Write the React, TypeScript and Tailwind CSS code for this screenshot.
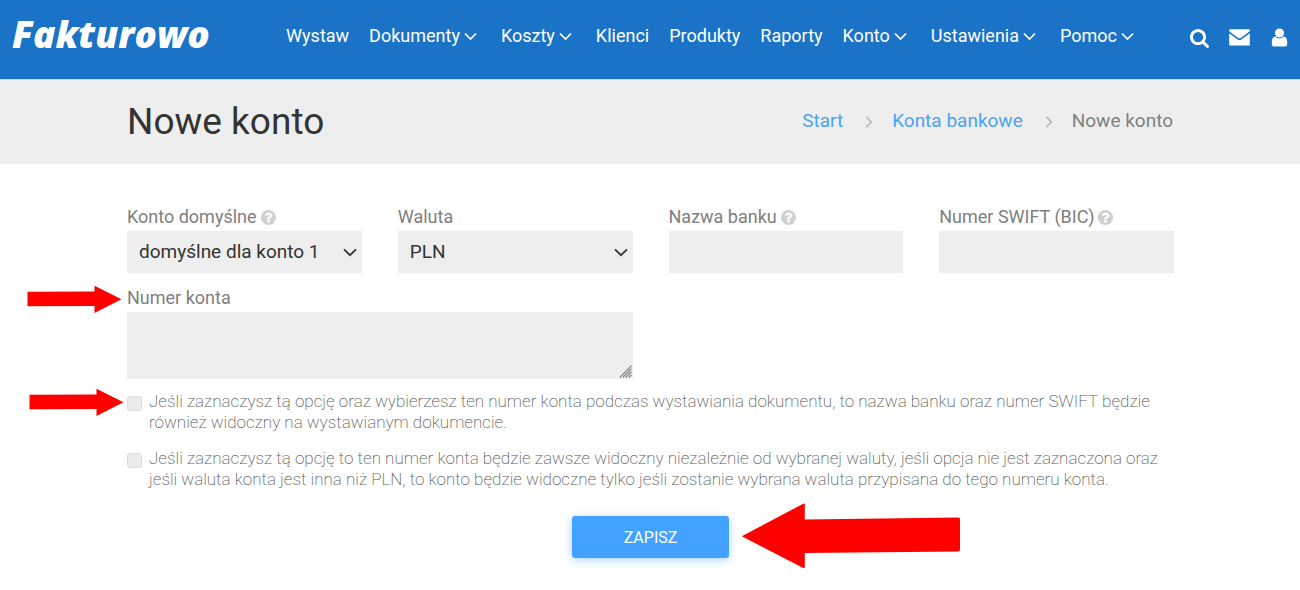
import type { ReactNode } from "react";

const NAV = [
  { label: "Wystaw" },
  { label: "Dokumenty", menu: true },
  { label: "Koszty", menu: true },
  { label: "Klienci" },
  { label: "Produkty" },
  { label: "Raporty" },
  { label: "Konto", menu: true },
  { label: "Ustawienia", menu: true },
  { label: "Pomoc", menu: true },
];

const FIELD = "block h-[42px] w-full rounded-none border-0 bg-[#eeeeee] px-3 text-[19px] text-[#333333] outline-none";

function Chevron({ className }: { className: string }) {
  return (
    <svg viewBox="0 0 14 9" className={className} fill="none" stroke="currentColor" strokeWidth="1.8" aria-hidden="true">
      <path d="M1 1.3 7 7.2l6-5.9" />
    </svg>
  );
}

function Help() {
  return (
    <svg viewBox="128 128 1536 1536" className="size-[15px] shrink-0 text-[#d0d0d0]" fill="currentColor" aria-hidden="true">
      <path d="M1024 1376v-192q0-14-9-23t-23-9h-192q-14 0-23 9t-9 23v192q0 14 9 23t23 9h192q14 0 23-9t9-23zm256-672q0-88-55.500-163t-138.500-116-170-41q-243 0-371 213-15 24 8 42l132 100q7 6 19 6 16 0 25-12 53-68 86-92 34-24 86-24 48 0 85.500 26t37.500 59q0 38-20 61t-68 45q-63 28-115.500 86.500t-52.500 125.500v36q0 14 9 23t23 9h192q14 0 23-9t9-23q0-19 21.500-49.500t54.500-49.500q32-18 49-28.500t46-35 44.500-48 28-60.500 12.500-81zm384 192q0 209-103 385.500t-279.500 279.500-385.500 103-385.500-103-279.500-279.500-103-385.500 103-385.500 279.500-279.500 385.500-103 385.500 103 279.500 279.500 103 385.500z" />
    </svg>
  );
}

function Arrow({ className }: { className: string }) {
  return (
    <svg viewBox="0 0 95 29" className={className} fill="#fe0000" aria-hidden="true">
      <path d="M.5 6.800 67.500 6.500V.7L94.500 14.300 67.500 28V20.900L.5 21.300z" />
    </svg>
  );
}

function Field({ id, label, help, children }: { id: string; label: string; help?: boolean; children: ReactNode }) {
  return (
    <div className="min-w-0">
      <label htmlFor={id} className="mb-0.5 flex h-6 items-center gap-1 text-[18px] leading-6 text-[#808080]">
        {label}
        {help && <Help />}
      </label>
      {children}
    </div>
  );
}

function Select({ id, option }: { id: string; option: string }) {
  return (
    <div className="relative">
      <select id={id} className={`${FIELD} appearance-none`}>
        <option>{option}</option>
      </select>
      <Chevron className="pointer-events-none absolute top-[17px] right-[5px] h-[9px] w-[14px] text-[#333333]" />
    </div>
  );
}

function Check({ id, children }: { id: string; children: ReactNode }) {
  return (
    <div className="flex items-start gap-[7px]">
      <input
        id={id}
        type="checkbox"
        className="mt-[5px] size-[15px] shrink-0 appearance-none rounded-[3px] border border-[#dcdcdc] bg-[#ebebeb] checked:bg-[#43a2ff]"
      />
      <label htmlFor={id} className="text-[17px] leading-[21px] font-extralight text-[#5c5c5c]">
        {children}
      </label>
    </div>
  );
}

export default function App() {
  return (
    <div className="min-h-screen bg-white font-['Roboto',sans-serif]">
      <header className="flex h-[79px] items-center bg-[#1a73c7] px-3 text-white">
        <a href="#" className="pb-3 font-['Open_Sans',sans-serif] text-[37px] leading-none font-extrabold italic">
          Fakturowo
        </a>
        <nav className="ml-auto flex items-center pb-[7px] text-[18px] leading-6">
          {NAV.map((item) => (
            <a
              key={item.label}
              href="#"
              className={item.menu ? "mr-6 flex items-center gap-1" : "mr-5 flex items-center"}
            >
              {item.label}
              {item.menu && <Chevron className="h-[9px] w-[13px]" />}
            </a>
          ))}
        </nav>
        <div className="ml-8 flex items-center pb-1">
          <button type="button" aria-label="Szukaj" className="mr-5">
            <svg viewBox="64 128 1664 1664" className="mt-0.5 size-[19px]" fill="currentColor">
              <path d="M1216 832q0-185-131.500-316.500t-316.500-131.500-316.500 131.500-131.500 316.500 131.500 316.500 316.500 131.500 316.500-131.500 131.500-316.500zm512 832q0 52-38 90t-90 38q-54 0-90-38l-343-342q-179 124-399 124-143 0-273.500-55.500t-225-150-150-225-55.500-273.500 55.500-273.500 150-225 225-150 273.500-55.500 273.500 55.500 225 150 150 225 55.500 273.500q0 220-124 399l343 343q37 37 37 90z" />
            </svg>
          </button>
          <button type="button" aria-label="Wiadomości" className="mr-[21px]">
            <svg viewBox="0 0 21 17" className="h-[17px] w-[21px]" fill="currentColor">
              <path d="M1 .3h19q.8 0 .8.8v1.200L11.800 9q-1.300.8-2.600 0L.2 2.300V1.100Q.2.300 1 .3z" />
              <path d="M.2 4.200 8.600 10.400q1.900 1.200 3.800 0L20.800 4.200V15.700q0 .9-.9.900H1.100q-.9 0-.9-.9z" />
            </svg>
          </button>
          <button type="button" aria-label="Profil">
            <svg viewBox="0 0 17 19" className="h-[19px] w-[17px]" fill="currentColor">
              <circle cx="8.500" cy="5" r="4.600" />
              <path d="M4.200 8.500Q6 10.600 8.500 10.600T12.800 8.500Q16.200 9 16.200 14.500V16.200Q16.200 18.400 14 18.400H3Q.8 18.400.8 16.200V14.500Q.8 9 4.200 8.500z" />
            </svg>
          </button>
        </div>
      </header>

      <section className="flex h-[85px] items-center justify-between border-t border-[#c3dcf3] bg-[#eeeeee] px-[127px] pb-0.5">
        <h1 className="text-[37px] leading-none text-[#333333]">Nowe konto</h1>
        <nav aria-label="Ścieżka" className="flex items-center text-[19px] leading-6">
          <a href="#" className="text-[#4ba3f5]">Start</a>
          <Chevron className="mt-0.5 mr-[17px] ml-5 h-[8px] w-[12px] -rotate-90 text-[#b8b8b8]" />
          <a href="#" className="text-[#4ba3f5]">Konta bankowe</a>
          <Chevron className="mt-0.5 mr-[17px] ml-5 h-[8px] w-[12px] -rotate-90 text-[#b8b8b8]" />
          <span className="text-[#808080]">Nowe konto</span>
        </nav>
      </section>

      <form className="pt-[41px] pr-[126px] pl-[127px]" onSubmit={(e) => e.preventDefault()}>
        <div className="grid grid-cols-4 gap-x-9 gap-y-[13px]">
          <Field id="default" label="Konto domyślne" help>
            <Select id="default" option="domyślne dla konto 1" />
          </Field>
          <Field id="currency" label="Waluta">
            <Select id="currency" option="PLN" />
          </Field>
          <Field id="bank" label="Nazwa banku" help>
            <input id="bank" type="text" className={FIELD} />
          </Field>
          <Field id="swift" label="Numer SWIFT (BIC)" help>
            <input id="swift" type="text" className={FIELD} />
          </Field>
          <div className="relative col-span-2">
            <Field id="number" label="Numer konta">
              <textarea
                id="number"
                className="block h-[67px] w-full resize-none rounded-none border-0 bg-[#eeeeee] p-3 text-[18px] text-[#333333] outline-none"
              />
            </Field>
            <svg
              viewBox="0 0 13 13"
              className="pointer-events-none absolute right-px bottom-px size-[13px]"
              fill="none"
              stroke="#8a8a8a"
              strokeWidth="1.3"
              aria-hidden="true"
            >
              <path d="M.8 12.500 12.500 .8M3.800 12.500 12.500 3.800M6.800 12.500 12.500 6.800M9.800 12.500 12.500 9.800" />
            </svg>
            <Arrow className="absolute top-[-1px] right-full mr-[5px] h-[29px] w-[95px]" />
          </div>
        </div>

        <div className="mt-3 flex flex-col gap-[15px]">
          <div className="relative">
            <Check id="showBank">
              Jeśli zaznaczysz tą opcję oraz wybierzesz ten numer konta podczas wystawiania dokumentu, to nazwa banku
              oraz numer SWIFT będzie również widoczny na wystawianym dokumencie.
            </Check>
            <Arrow className="absolute top-[-3px] right-full mr-[3px] h-[29px] w-[95px]" />
          </div>
          <Check id="always">
            Jeśli zaznaczysz tą opcję to ten numer konta będzie zawsze widoczny niezależnie od wybranej waluty, jeśli
            opcja nie jest zaznaczona oraz jeśli waluta konta jest inna niż PLN, to konto będzie widoczne tylko jeśli
            zostanie wybrana waluta przypisana do tego numeru konta.
          </Check>
        </div>

        <div className="mt-[26px] flex justify-center">
          <div className="relative">
            <button
              type="submit"
              className="block h-[42px] w-[157px] rounded-[3px] bg-[#43a2ff] pt-0.5 text-[16px] text-white shadow-[0_2px_8px_rgba(67,162,255,0.45)]"
            >
              ZAPISZ
            </button>
            <svg
              viewBox="0 0 220 66"
              className="absolute top-[-13px] left-full ml-3 h-[66px] w-[220px]"
              fill="#fe0000"
              aria-hidden="true"
            >
              <path d="M.8 33.200 62.300.7Q63.800.2 63.800 1.600V16.500L217.500 14.500Q219 14.500 219 16V46.500Q219 48.500 217.500 48.500L63.800 50V64Q63.800 65.500 62.300 65z" />
            </svg>
          </div>
        </div>
      </form>
    </div>
  );
}
